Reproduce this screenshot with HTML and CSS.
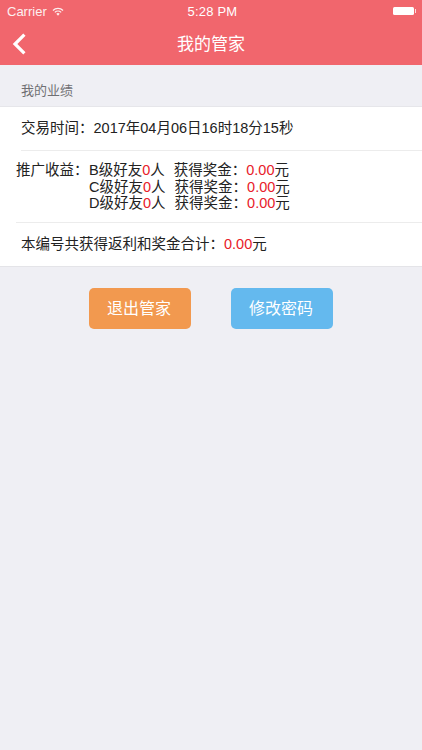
FILE: index.html
```html
<!DOCTYPE html>
<html lang="zh-CN">
<head>
    <meta charset="UTF-8">
    <title>我的管家</title>
    <link rel="stylesheet" href="styles.css">
</head>
<body>
    <div class="status-bar">
        <div class="status-left">
            <span>Carrier</span>
            <svg class="wifi" width="12" height="9" viewBox="0 0 14 10.5">
                <path d="M0.6 3.6a9 9 0 0 1 12.8 0l-1 1a7.6 7.6 0 0 0-10.8 0z" fill="#fff"/>
                <path d="M2.8 5.8a6 6 0 0 1 8.4 0l-1 1a4.6 4.6 0 0 0-6.4 0z" fill="#fff"/>
                <path d="M5 8a2.8 2.8 0 0 1 4 0l-2 2.2z" fill="#fff"/>
            </svg>
        </div>
        <div class="status-time">5:28 PM</div>
        <div class="status-right">
            <div class="battery"></div>
            <div class="battery-tip"></div>
        </div>
    </div>

    <div class="nav-bar">
        <svg class="back" width="14" height="22" viewBox="0 0 14 22">
            <path d="M12.4 1.6L3 11l9.4 9.4" fill="none" stroke="#fff" stroke-width="3.2"/>
        </svg>
        <div class="nav-title">我的管家</div>
    </div>

    <div class="section-title">我的业绩</div>

    <div class="panel">
        <div class="row-time">交易时间：2017年04月06日16时18分15秒</div>
        <div class="row-income">
            <div class="income-label">推广收益：</div>
            <div class="income-list">
                <div class="income-line">B级好友<span class="red">0</span>人<span class="bonus">获得奖金：</span><span class="red">0.00</span>元</div>
                <div class="income-line">C级好友<span class="red">0</span>人<span class="bonus">获得奖金：</span><span class="red">0.00</span>元</div>
                <div class="income-line">D级好友<span class="red">0</span>人<span class="bonus">获得奖金：</span><span class="red">0.00</span>元</div>
            </div>
        </div>
        <div class="row-total">本编号共获得返利和奖金合计：<span class="red">0.00</span>元</div>
    </div>

    <div class="actions">
        <button class="action-button logout">退出管家</button>
        <button class="action-button password">修改密码</button>
    </div>
</body>
</html>
```

FILE: styles.css
```css
/* Page */
body {
    margin: 0;
    width: 422px;
    height: 750px;
    overflow: hidden;
    background-color: #efeff4;
    font-family: "Liberation Sans", "Noto Sans CJK SC", sans-serif;
    color: #222;
}

/* Status bar */
.status-bar {
    display: flex;
    align-items: center;
    justify-content: space-between;
    height: 22px;
    padding: 0 6px 0 7px;
    background-color: #f1666d;
    color: #fff;
    font-size: 13px;
    position: relative;
}

.status-left {
    display: flex;
    align-items: center;
    gap: 5px;
    opacity: 0.9;
}

.status-time {
    position: absolute;
    left: 0;
    right: 0;
    text-align: center;
    font-size: 13px;
    letter-spacing: 0.2px;
    padding-left: 3px;
}

.status-right {
    display: flex;
    align-items: center;
}

.battery {
    width: 21px;
    height: 8px;
    background-color: #fff;
    border-radius: 1.5px;
}

.battery-tip {
    width: 1.5px;
    height: 4px;
    margin-left: 1px;
    background-color: #fbdcdd;
}

/* Nav bar */
.nav-bar {
    display: flex;
    align-items: center;
    justify-content: center;
    height: 43px;
    background-color: #f1666d;
    position: relative;
}

.back {
    position: absolute;
    left: 12px;
    top: 11px;
}

.nav-title {
    color: #fff;
    font-size: 17px;
    margin-top: -3px;
}

/* Section */
.section-title {
    height: 41px;
    padding-left: 21px;
    line-height: 52px;
    font-size: 13px;
    color: #6f6f73;
    box-sizing: border-box;
}

.panel {
    background-color: #fff;
    border-top: 1px solid #e6e6ea;
    border-bottom: 1px solid #e4e4e8;
    font-size: 14.5px;
}

.row-time {
    height: 44px;
    margin-left: 21px;
    line-height: 43px;
    box-sizing: border-box;
    border-bottom: 1px solid #ececec;
}

.row-income {
    display: flex;
    height: 72px;
    margin-left: 16px;
    padding-top: 11px;
    box-sizing: border-box;
    border-bottom: 1px solid #ececec;
}

.income-label {
    width: 73px;
    line-height: 16.5px;
}

.income-line {
    height: 16.5px;
    line-height: 16.5px;
    white-space: nowrap;
}

.bonus {
    margin-left: 9px;
}

.row-total {
    height: 43px;
    margin-left: 21px;
    line-height: 43px;
}

.red {
    color: #e8202a;
}

/* Buttons */
.actions {
    display: flex;
    justify-content: center;
    gap: 40px;
    margin-top: 21px;
}

.action-button {
    width: 102px;
    height: 41px;
    padding: 0 2px 4px 0;
    border: none;
    border-radius: 5px;
    color: #fff;
    font-family: inherit;
    font-size: 16px;
}

.logout {
    background-color: #f2994f;
}

.password {
    background-color: #64b9ee;
}
```
